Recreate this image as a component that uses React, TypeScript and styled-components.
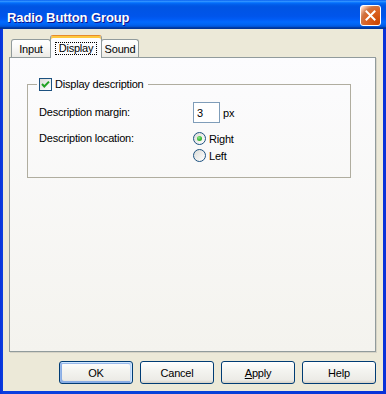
import React from "react";
import styled, { createGlobalStyle, css } from "styled-components";

const GlobalStyle = createGlobalStyle`
  html, body { margin: 0; padding: 0; background: #fff; }
  body {
    font-family: "Liberation Sans", Arial, sans-serif;
    font-size: 11px;
    letter-spacing: -0.2px;
    color: #000;
  }
  * { box-sizing: border-box; }
`;

const Window = styled.div`
  width: 386px;
  height: 394px;
  display: flex;
  flex-direction: column;
  background: linear-gradient(to right, #0831d9 0, #0a3ee0 3px, #0642d8 50%, #0831d9 100%);
`;

const TitleBar = styled.div`
  height: 29px;
  flex: none;
  display: flex;
  align-items: flex-start;
  justify-content: space-between;
  padding: 0 5px 0 7px;
  background: linear-gradient(
    to bottom,
    #0058ee 0%,
    #3593ff 4%,
    #288eff 6%,
    #127dff 8%,
    #036ffc 10%,
    #0262ee 14%,
    #0057e5 20%,
    #0054e3 24%,
    #0055eb 56%,
    #005bf5 66%,
    #026afe 76%,
    #0062ef 86%,
    #0052d6 92%,
    #0040ab 94%,
    #003092 100%
  );
`;

const Title = styled.span`
  margin-top: 10px;
  font: bold 13px/15px "Liberation Sans", Arial, sans-serif;
  letter-spacing: -0.1px;
  color: #fff;
  text-shadow: 1px 1px #0f1089;
`;

const CloseButton = styled.div`
  margin-top: 5px;
  width: 21px;
  height: 21px;
  border: 1px solid #fff;
  border-radius: 3px;
  display: grid;
  place-items: center;
  background: radial-gradient(circle at 90% 90%, #cc4600 0%, #dc6527 55%, #cd7546 70%, #ffccb2 90%, #fff 100%);
`;

const Client = styled.div`
  flex: 1;
  margin: 0 3px 3px;
  background: #ece9d8;
  display: flex;
  flex-direction: column;
  padding: 6px 7px 7px 6px;
`;

const TabRow = styled.div`
  height: 22px;
  flex: none;
  display: flex;
  align-items: flex-end;
  padding-left: 2px;
`;

const Tab = styled.div<{ $active?: boolean; $w: number }>`
  width: ${(p) => p.$w}px;
  height: 18px;
  display: flex;
  align-items: center;
  justify-content: center;
  border: 1px solid #919b9c;
  border-bottom: none;
  border-radius: 3px 3px 0 0;
  background: linear-gradient(to bottom, #fff 0%, #fafaf9 40%, #ecebe6 100%);
  ${(p) =>
    p.$active &&
    css`
      position: relative;
      z-index: 1;
      height: 23px;
      margin: 0 -1px -1px;
      align-items: flex-start;
      padding-top: 6px;
      background: #fcfcfe;
      border-top: 1px solid #e68b2c;
      box-shadow: inset 0 2px #ffc83c;
    `}
`;

const FocusLabel = styled.span`
  border: 1px dotted #000;
  padding: 0 3px;
  line-height: 11px;
`;

const Panel = styled.div`
  height: 295px;
  flex: none;
  border: 1px solid #919b9c;
  background: linear-gradient(to bottom, #fcfcfe, #f4f3ee);
  box-shadow: 1px 1px 0 #d6d3c6;
  padding: 20px 0 0 17px;
`;

const Group = styled.fieldset`
  margin: 0;
  width: 324px;
  min-inline-size: 0;
  border: 1px solid #b0ad9f;
  padding: 11px 8px 13px 11px;
`;

const Legend = styled.legend`
  margin-left: -2px;
  padding: 0 4px 0 2px;
  height: 13px;
  display: flex;
  align-items: center;
  gap: 3px;
  line-height: 13px;
`;

const CheckBox = styled.span`
  width: 13px;
  height: 13px;
  flex: none;
  border: 1px solid #1c5180;
  background: linear-gradient(135deg, #dcdcd7, #fff);
  display: grid;
  place-items: center;
`;

const Form = styled.div`
  display: grid;
  grid-template-columns: 154px auto;
  row-gap: 7px;
  align-items: start;
`;

const FieldLabel = styled.span<{ $center?: boolean }>`
  line-height: 17px;
  align-self: ${(p) => (p.$center ? "center" : "start")};
`;

const Inline = styled.div`
  display: flex;
  align-items: center;
  gap: 3px;
`;

const NumberBox = styled.input`
  width: 27px;
  height: 21px;
  border: 1px solid #7f9db9;
  background: #fff;
  padding: 0 0 0 3px;
  margin: 0;
  font: inherit;
  letter-spacing: inherit;
  color: #000;
  outline: none;
`;

const RadioGroup = styled.div`
  display: flex;
  flex-direction: column;
`;

const RadioItem = styled.div`
  height: 17px;
  display: flex;
  align-items: center;
  gap: 3px;
`;

const RadioCircle = styled.span`
  width: 13px;
  height: 13px;
  flex: none;
  border: 1px solid #1c5180;
  border-radius: 50%;
  background: linear-gradient(135deg, #dcdcd7, #fff);
  display: grid;
  place-items: center;
`;

const RadioDot = styled.span`
  width: 5px;
  height: 5px;
  border-radius: 50%;
  background: radial-gradient(circle at 40% 35%, #8fe88c 0%, #3dbb38 50%, #21a121 100%);
`;

const ButtonRow = styled.div`
  margin-top: 9px;
  display: flex;
  justify-content: flex-end;
  gap: 7px;
`;

const Button = styled.div<{ $default?: boolean }>`
  width: 74px;
  height: 23px;
  border: 1px solid #003c74;
  border-radius: 3px;
  display: grid;
  place-items: center;
  background: linear-gradient(to bottom, #fff 0%, #f4f4f0 40%, #ecebe6 86%, #d6d0c5 100%);
  ${(p) =>
    p.$default &&
    css`
      box-shadow: inset -1px 1px #cee7ff, inset 1px 2px #98b8ea, inset -2px 2px #bcd4f6,
        inset 1px -1px #89ade4, inset 2px -2px #89ade4;
    `}
`;

const Check = () => (
  <svg width="11" height="11" viewBox="0 0 11 11">
    <path d="M2 5 L4.3 7.5 L9 2.6" fill="none" stroke="#21a121" strokeWidth="2" />
  </svg>
);

const CloseX = () => (
  <svg width="11" height="11" viewBox="0 0 11 11">
    <path d="M1.5 1.5 L9.5 9.5 M9.5 1.5 L1.5 9.5" stroke="#fff" strokeWidth="2" strokeLinecap="square" />
  </svg>
);

export default function App() {
  return (
    <>
      <GlobalStyle />
      <Window>
        <TitleBar>
          <Title>Radio Button Group</Title>
          <CloseButton>
            <CloseX />
          </CloseButton>
        </TitleBar>
        <Client>
          <TabRow>
            <Tab $w={40}>Input</Tab>
            <Tab $w={52} $active>
              <FocusLabel>Display</FocusLabel>
            </Tab>
            <Tab $w={38}>Sound</Tab>
          </TabRow>
          <Panel>
            <Group>
              <Legend>
                <CheckBox>
                  <Check />
                </CheckBox>
                Display description
              </Legend>
              <Form>
                <FieldLabel $center>Description margin:</FieldLabel>
                <Inline>
                  <NumberBox value="3" readOnly />
                  <span>px</span>
                </Inline>
                <FieldLabel>Description location:</FieldLabel>
                <RadioGroup>
                  <RadioItem>
                    <RadioCircle>
                      <RadioDot />
                    </RadioCircle>
                    Right
                  </RadioItem>
                  <RadioItem>
                    <RadioCircle />
                    Left
                  </RadioItem>
                </RadioGroup>
              </Form>
            </Group>
          </Panel>
          <ButtonRow>
            <Button $default>OK</Button>
            <Button>Cancel</Button>
            <Button>
              <span>
                <u>A</u>pply
              </span>
            </Button>
            <Button>Help</Button>
          </ButtonRow>
        </Client>
      </Window>
    </>
  );
}
